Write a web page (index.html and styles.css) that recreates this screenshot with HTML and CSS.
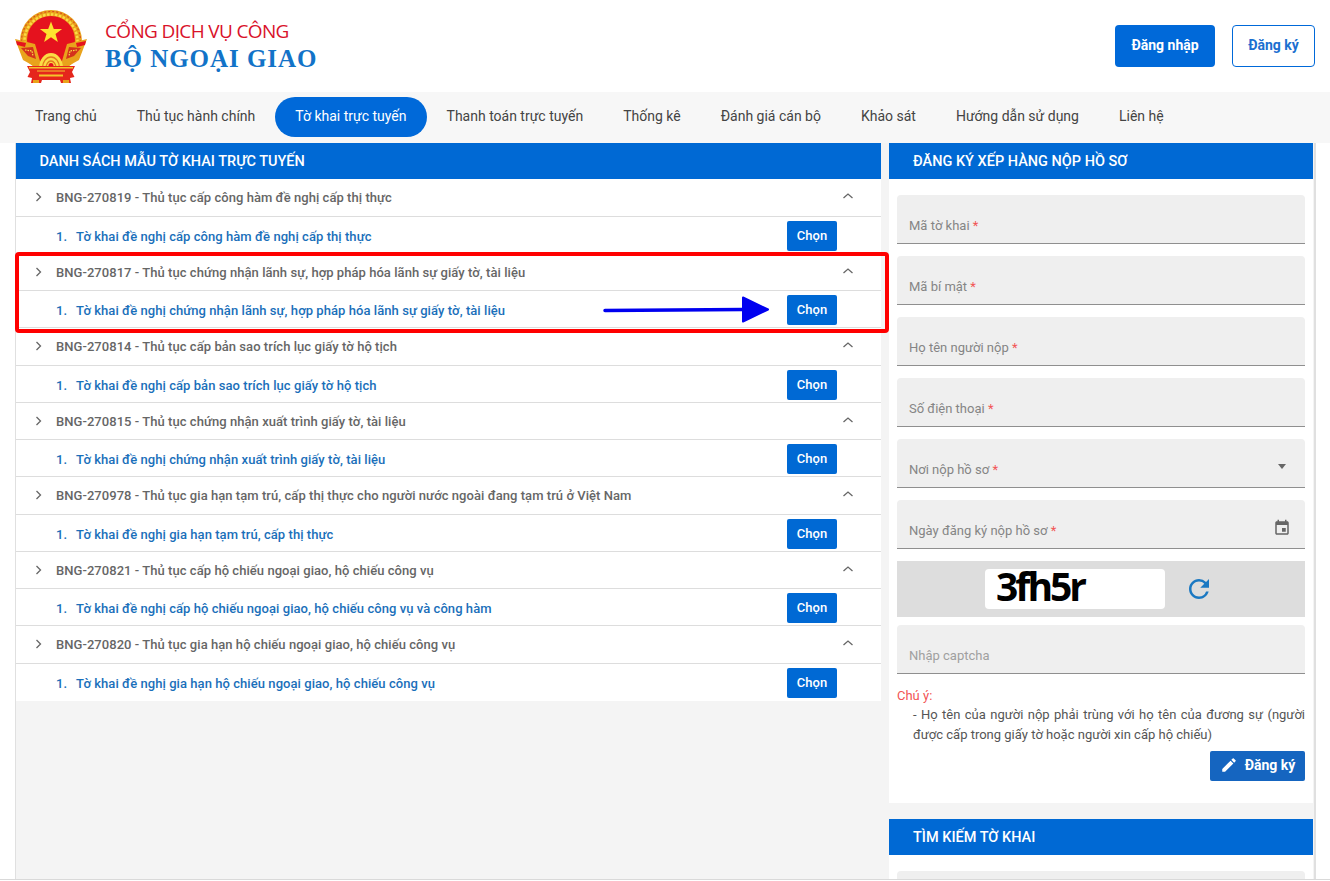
FILE: index.html
```html
<!DOCTYPE html>
<html lang="vi">
<head>
  <meta charset="UTF-8">
  <meta name="viewport" content="width=device-width, initial-scale=1.0">
  <title>Cổng dịch vụ công - Bộ Ngoại giao</title>
  <link rel="stylesheet" href="styles.css">
</head>
<body>
<div class="page">
  <!-- Header -->
  <div class="header">
    <a href="#" class="brand">
      <svg class="emblem" viewBox="0 0 72 73" aria-hidden="true">
        <!-- wreath -->
        <circle cx="36" cy="31" r="31" fill="#e9a31c"/>
        <circle cx="36" cy="31" r="29.500" fill="none" stroke="#d9501c" stroke-width="1.200" stroke-dasharray="2 2"/>
        <circle cx="36" cy="31" r="26.500" fill="none" stroke="#fbdc45" stroke-width="2.500" stroke-dasharray="2.500 1.500"/>
        <circle cx="36" cy="30" r="24" fill="#e5121e"/>
        <!-- star -->
        <path d="M36 11.500l2.800 7.600h8.300l-6.600 5 2.400 7.900-6.900-4.800-6.900 4.800 2.400-7.900-6.600-5h8.300z" fill="#fde22f"/>
        <!-- side scrolls -->
        <path d="M0 29l20 5 5 17 7 8H24L8 50z" fill="#e9a31c"/>
        <path d="M72 29l-20 5-5 17-7 8h8l16-9z" fill="#e9a31c"/>
        <path d="M1 31l10 2-1 4-8-2zM71 31l-10 2 1 4 8-2z" fill="#e5121e"/>
        <path d="M6 38l12-1 3 12-8-3zM66 38l-12-1-3 12 8-3z" fill="#d4321c"/>
        <path d="M10 40l7 1 1 5M62 40l-7 1-1 5" fill="none" stroke="#fbdc45" stroke-width="1.200" stroke-dasharray="1.500 1"/>
        <!-- gear -->
        <path d="M24 58a12 15 0 0 1 24 0z" fill="#fbdc45"/>
        <path d="M27.500 58a8.500 11 0 0 1 17 0M31 58a5 7 0 0 1 10 0" fill="none" stroke="#e4791c" stroke-width="1.300"/>
        <circle cx="36" cy="55.500" r="2.500" fill="#e5121e"/>
        <!-- ribbon -->
        <path d="M12 56h48l-3 6 2.500 5-4.500 1 1 5H46l-1-3H27l-1 3H16l1-5-4.500-1L15 62z" fill="#e5261c"/>
        <path d="M14 57h44v1.500H14zM22 60.500h28v1H22zM24 64.500h24v2H24z" fill="#f4c42c"/>
        <path d="M18 70h6v3h-6zM48 70h6v3h-6z" fill="#e9a31c"/>
      </svg>
      <span class="brand-text">
        <span class="brand-top">CỔNG DỊCH VỤ CÔNG</span>
        <span class="brand-name">BỘ NGOẠI GIAO</span>
      </span>
    </a>
    <div class="header-actions">
      <a href="#" class="btn-login">Đăng nhập</a>
      <a href="#" class="btn-register">Đăng ký</a>
    </div>
  </div>

  <!-- Menu -->
  <div class="nav">
    <a href="#" class="nav-item">Trang chủ</a>
    <a href="#" class="nav-item">Thủ tục hành chính</a>
    <a href="#" class="nav-item active">Tờ khai trực tuyến</a>
    <a href="#" class="nav-item">Thanh toán trực tuyến</a>
    <a href="#" class="nav-item">Thống kê</a>
    <a href="#" class="nav-item">Đánh giá cán bộ</a>
    <a href="#" class="nav-item">Khảo sát</a>
    <a href="#" class="nav-item">Hướng dẫn sử dụng</a>
    <a href="#" class="nav-item">Liên hệ</a>
  </div>

  <div class="main">
    <!-- Left column -->
    <div class="col-left">
      <div class="panel-title">DANH SÁCH MẪU TỜ KHAI TRỰC TUYẾN</div>
      <div class="list">
        <div class="group-row">
          <svg class="chev-right" viewBox="0 0 8 10"><path d="M1.500 1l4 4-4 4"/></svg>
          <span class="group-name">BNG-270819 - Thủ tục cấp công hàm đề nghị cấp thị thực</span>
          <svg class="chev-up" viewBox="0 0 12 8"><path d="M1.500 6l4.500-4 4.500 4"/></svg>
        </div>
        <div class="form-row">
          <span class="form-no">1.</span>
          <a href="#" class="form-name">Tờ khai đề nghị cấp công hàm đề nghị cấp thị thực</a>
          <button class="btn-choose">Chọn</button>
        </div>

        <div class="group-row">
          <svg class="chev-right" viewBox="0 0 8 10"><path d="M1.500 1l4 4-4 4"/></svg>
          <span class="group-name">BNG-270817 - Thủ tục chứng nhận lãnh sự, hợp pháp hóa lãnh sự giấy tờ, tài liệu</span>
          <svg class="chev-up" viewBox="0 0 12 8"><path d="M1.500 6l4.500-4 4.500 4"/></svg>
        </div>
        <div class="form-row">
          <span class="form-no">1.</span>
          <a href="#" class="form-name">Tờ khai đề nghị chứng nhận lãnh sự, hợp pháp hóa lãnh sự giấy tờ, tài liệu</a>
          <button class="btn-choose">Chọn</button>
        </div>

        <div class="group-row">
          <svg class="chev-right" viewBox="0 0 8 10"><path d="M1.500 1l4 4-4 4"/></svg>
          <span class="group-name">BNG-270814 - Thủ tục cấp bản sao trích lục giấy tờ hộ tịch</span>
          <svg class="chev-up" viewBox="0 0 12 8"><path d="M1.500 6l4.500-4 4.500 4"/></svg>
        </div>
        <div class="form-row">
          <span class="form-no">1.</span>
          <a href="#" class="form-name">Tờ khai đề nghị cấp bản sao trích lục giấy tờ hộ tịch</a>
          <button class="btn-choose">Chọn</button>
        </div>

        <div class="group-row">
          <svg class="chev-right" viewBox="0 0 8 10"><path d="M1.500 1l4 4-4 4"/></svg>
          <span class="group-name">BNG-270815 - Thủ tục chứng nhận xuất trình giấy tờ, tài liệu</span>
          <svg class="chev-up" viewBox="0 0 12 8"><path d="M1.500 6l4.500-4 4.500 4"/></svg>
        </div>
        <div class="form-row">
          <span class="form-no">1.</span>
          <a href="#" class="form-name">Tờ khai đề nghị chứng nhận xuất trình giấy tờ, tài liệu</a>
          <button class="btn-choose">Chọn</button>
        </div>

        <div class="group-row">
          <svg class="chev-right" viewBox="0 0 8 10"><path d="M1.500 1l4 4-4 4"/></svg>
          <span class="group-name">BNG-270978 - Thủ tục gia hạn tạm trú, cấp thị thực cho người nước ngoài đang tạm trú ở Việt Nam</span>
          <svg class="chev-up" viewBox="0 0 12 8"><path d="M1.500 6l4.500-4 4.500 4"/></svg>
        </div>
        <div class="form-row">
          <span class="form-no">1.</span>
          <a href="#" class="form-name">Tờ khai đề nghị gia hạn tạm trú, cấp thị thực</a>
          <button class="btn-choose">Chọn</button>
        </div>

        <div class="group-row">
          <svg class="chev-right" viewBox="0 0 8 10"><path d="M1.500 1l4 4-4 4"/></svg>
          <span class="group-name">BNG-270821 - Thủ tục cấp hộ chiếu ngoại giao, hộ chiếu công vụ</span>
          <svg class="chev-up" viewBox="0 0 12 8"><path d="M1.500 6l4.500-4 4.500 4"/></svg>
        </div>
        <div class="form-row">
          <span class="form-no">1.</span>
          <a href="#" class="form-name">Tờ khai đề nghị cấp hộ chiếu ngoại giao, hộ chiếu công vụ và công hàm</a>
          <button class="btn-choose">Chọn</button>
        </div>

        <div class="group-row">
          <svg class="chev-right" viewBox="0 0 8 10"><path d="M1.500 1l4 4-4 4"/></svg>
          <span class="group-name">BNG-270820 - Thủ tục gia hạn hộ chiếu ngoại giao, hộ chiếu công vụ</span>
          <svg class="chev-up" viewBox="0 0 12 8"><path d="M1.500 6l4.500-4 4.500 4"/></svg>
        </div>
        <div class="form-row last">
          <span class="form-no">1.</span>
          <a href="#" class="form-name">Tờ khai đề nghị gia hạn hộ chiếu ngoại giao, hộ chiếu công vụ</a>
          <button class="btn-choose">Chọn</button>
        </div>
      </div>
    </div>

    <!-- Right column -->
    <div class="col-right">
      <div class="panel-title">ĐĂNG KÝ XẾP HÀNG NỘP HỒ SƠ</div>
      <div class="panel-body">
        <div class="field"><span class="field-label">Mã tờ khai <em>*</em></span></div>
        <div class="field"><span class="field-label">Mã bí mật <em>*</em></span></div>
        <div class="field"><span class="field-label">Họ tên người nộp <em>*</em></span></div>
        <div class="field"><span class="field-label">Số điện thoại <em>*</em></span></div>
        <div class="field">
          <span class="field-label">Nơi nộp hồ sơ <em>*</em></span>
          <span class="select-caret"></span>
        </div>
        <div class="field">
          <span class="field-label">Ngày đăng ký nộp hồ sơ <em>*</em></span>
          <svg class="field-icon" viewBox="0 0 24 24"><path d="M17 12h-5v5h5v-5zM16 1v2H8V1H6v2H5c-1.110 0-1.990.9-1.990 2L3 19c0 1.100.89 2 2 2h14c1.100 0 2-.9 2-2V5c0-1.100-.9-2-2-2h-1V1h-2zm3 18H5V8h14v11z"/></svg>
        </div>
        <div class="captcha">
          <div class="captcha-code">3fh5r</div>
          <svg class="captcha-refresh" viewBox="0 0 24 24"><path d="M17.650 6.350A7.958 7.958 0 0 0 12 4c-4.420 0-7.990 3.580-7.990 8s3.570 8 7.990 8c3.730 0 6.840-2.550 7.730-6h-2.080A5.990 5.990 0 0 1 12 18c-3.310 0-6-2.690-6-6s2.690-6 6-6c1.660 0 3.140.69 4.220 1.780L13 11h7V4l-2.350 2.350z"/></svg>
        </div>
        <div class="field"><span class="field-label light">Nhập captcha</span></div>
        <div class="note-title">Chú ý:</div>
        <div class="note-text">- Họ tên của người nộp phải trùng với họ tên của đương sự (người được cấp trong giấy tờ hoặc người xin cấp hộ chiếu)</div>
        <div class="submit-bar">
          <button class="btn-submit">
            <svg viewBox="0 0 24 24"><path d="M3 17.250V21h3.750L17.810 9.940l-3.750-3.750L3 17.250zM20.710 7.040a1 1 0 0 0 0-1.410l-2.340-2.340a1 1 0 0 0-1.410 0l-1.830 1.830 3.750 3.750 1.830-1.830z"/></svg>
            <span>Đăng ký</span>
          </button>
        </div>
      </div>

      <div class="panel-title second">TÌM KIẾM TỜ KHAI</div>
      <div class="panel-body">
        <div class="field"></div>
      </div>
    </div>

    <!-- Annotation drawn over the screenshot -->
    <div class="mark-box"></div>
    <svg class="mark-arrow" viewBox="0 0 170 30">
      <path d="M2 15.500L140 14.500" stroke="#0000f0" stroke-width="3.500" stroke-linecap="round" fill="none"/>
      <path d="M140 2.500l25 12-25 12z" fill="#0000f0" stroke="#0000f0" stroke-width="2" stroke-linejoin="round"/>
    </svg>
  </div>
</div>
</body>
</html>
```

FILE: styles.css
```css
html, body {
  margin: 0;
  padding: 0;
  height: 881px;
  overflow: hidden;
  background: white;
  font-family: Roboto, "Noto Sans", sans-serif;
}

.page {
  height: 879px;
  overflow: hidden;
  border-bottom: 1px solid #d9d9d9;
}

a {
  text-decoration: none;
}

/* Header */
.header {
  height: 92px;
  box-sizing: border-box;
  padding: 0 15px;
  display: flex;
  align-items: center;
  justify-content: space-between;
}

.brand {
  display: flex;
  align-items: center;
  gap: 18px;
}

.emblem {
  width: 72px;
  height: 73px;
}

.brand-text {
  display: flex;
  flex-direction: column;
  padding-top: 1px;
}

.brand-top {
  font-family: "Open Sans", sans-serif;
  font-size: 19px;
  line-height: 25px;
  letter-spacing: -0.65px;
  color: #d9122a;
}

.brand-name {
  font-family: "Liberation Serif", serif;
  font-weight: bold;
  font-size: 25px;
  line-height: 30px;
  letter-spacing: 0.95px;
  color: #1273c8;
}

.header-actions {
  display: flex;
  gap: 17px;
}

.btn-login, .btn-register {
  height: 42px;
  box-sizing: border-box;
  padding-bottom: 2px;
  display: flex;
  align-items: center;
  justify-content: center;
  font-size: 14px;
  font-weight: bold;
  border-radius: 4px;
}

.btn-login {
  width: 100px;
  background: #0069d9;
  color: white;
}

.btn-register {
  width: 83px;
  background: white;
  color: #1a6fd0;
  border: 1px solid #0069d9;
}

/* Menu */
.nav {
  height: 51px;
  box-sizing: border-box;
  padding: 5px 15px 0;
  background: #f7f7f7;
  display: flex;
  align-items: flex-start;
}

.nav-item {
  height: 40px;
  padding: 0 20px;
  line-height: 38px;
  font-size: 14px;
  color: #444;
  white-space: nowrap;
}

.nav-item.active {
  background: #0069d9;
  color: white;
  border-radius: 20px;
}

/* Main */
.main {
  position: relative;
  margin: 0 14px 0 15px;
  height: 736px;
  box-sizing: border-box;
  background: #f4f4f4;
  border-left: 1px solid #e0e0e0;
  border-right: 2px solid #e0e0e0;
  padding-right: 1px;
  display: flex;
  gap: 8px;
}

.col-left {
  width: 865px;
}

.col-right {
  width: 424px;
}

.panel-title {
  height: 36px;
  line-height: 37px;
  padding-left: 24px;
  background: #0069d4;
  color: white;
  font-size: 14.500px;
  font-weight: 500;
}

.col-left > .panel-title {
  padding-left: 23.5px;
}

.panel-title.second {
  margin-top: 16px;
}

/* Left list */
.list {
  background: white;
}

.group-row, .form-row {
  box-sizing: border-box;
  border-bottom: 1px solid #ddd;
  display: flex;
  align-items: center;
  position: relative;
  font-size: 13px;
  font-weight: 500;
}

.group-row {
  height: 37.5px;
  padding-top: 1px;
  letter-spacing: 0.05px;
}

.form-row {
  height: 37px;
  padding-top: 3px;
  letter-spacing: 0.06px;
}

.form-row.last {
  border-bottom: none;
}

.chev-right {
  position: absolute;
  left: 19px;
  top: 13px;
  width: 8px;
  height: 10px;
}

.chev-up {
  position: absolute;
  left: 826px;
  top: 13px;
  width: 12px;
  height: 8px;
}

.chev-right path, .chev-up path {
  fill: none;
  stroke: #666;
  stroke-width: 1.300;
}

.group-name {
  margin-left: 40px;
  color: #666;
}

.form-no {
  margin-left: 40px;
  width: 20px;
  color: #1a6fba;
}

.form-name {
  color: #1a6fba;
}

.btn-choose {
  position: absolute;
  left: 771px;
  top: 4px;
  width: 50px;
  height: 30px;
  padding: 0 0 1px;
  border: none;
  border-radius: 2px;
  background: #0069d4;
  color: white;
  font-family: inherit;
  font-size: 13px;
  font-weight: 500;
}

/* Right panel */
.panel-body {
  background: white;
  padding: 16px 8px 22px;
}

.field {
  height: 49px;
  box-sizing: border-box;
  margin-bottom: 12px;
  padding: 0 12px 8px;
  background: #efefef;
  border-bottom: 1px solid #8f8f8f;
  border-radius: 4px 4px 0 0;
  display: flex;
  align-items: flex-end;
  justify-content: space-between;
}

.field-label {
  font-size: 13px;
  line-height: 18px;
  color: #858585;
}

.field-label.light {
  color: #a0a0a0;
}

.field-label em {
  font-style: normal;
  color: #f25555;
}

.select-caret {
  width: 0;
  height: 0;
  margin: 0 7px 10px 0;
  border-left: 4px solid transparent;
  border-right: 4px solid transparent;
  border-top: 5px solid #666;
}

.field-icon {
  width: 18px;
  height: 18px;
  margin: 0 2px 3px 0;
  fill: #666;
}

.captcha {
  height: 56px;
  margin-bottom: 8px;
  background: #ddd;
  display: flex;
  align-items: center;
  padding-left: 88px;
}

.captcha-code {
  width: 180px;
  height: 40px;
  box-sizing: border-box;
  padding-left: 11px;
  background: white;
  border-radius: 4px;
  font-family: "Open Sans", sans-serif;
  font-weight: bold;
  font-size: 39px;
  line-height: 33px;
  letter-spacing: -3px;
  color: black;
}

.captcha-refresh {
  width: 30px;
  height: 30px;
  margin-left: 19px;
  fill: #1a78c2;
}

.note-title {
  font-size: 13px;
  line-height: 19px;
  color: #f25555;
}

.note-text {
  margin-left: 16px;
  font-size: 13px;
  line-height: 19.500px;
  color: #555;
  text-align: justify;
}

.submit-bar {
  display: flex;
  justify-content: flex-end;
  margin-top: 7px;
}

.btn-submit {
  width: 95px;
  height: 30px;
  padding: 0 0 2px;
  border: none;
  border-radius: 2px;
  background: #1565c0;
  color: white;
  font-family: inherit;
  font-size: 14px;
  font-weight: bold;
  display: flex;
  align-items: center;
  justify-content: center;
  gap: 7px;
}

.btn-submit svg {
  width: 18px;
  height: 18px;
  fill: white;
}

/* Annotation */
.mark-box {
  position: absolute;
  left: -1px;
  top: 109px;
  width: 874px;
  height: 81px;
  box-sizing: border-box;
  border: 4px solid #ff0000;
  border-radius: 4px;
}

.mark-arrow {
  position: absolute;
  left: 587px;
  top: 152px;
  width: 170px;
  height: 30px;
}
```
